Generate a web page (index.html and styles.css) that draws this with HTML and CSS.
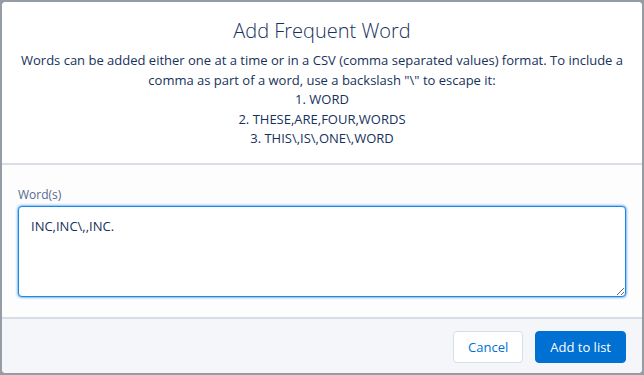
FILE: index.html
```html
<!DOCTYPE html>
<html>
<head>
<meta charset="utf-8">
<link rel="stylesheet" href="styles.css">
</head>
<body>
<div class="backdrop">
  <section class="modal">
    <header class="modal-header">
      <h2 class="modal-title">Add Frequent Word</h2>
      <div class="modal-desc">
        <p>Words can be added either one at a time or in a CSV (comma separated values) format. To include a comma as part of a word, use a backslash "\" to escape it:</p>
        <p>1. WORD</p>
        <p>2. THESE,ARE,FOUR,WORDS</p>
        <p>3. THIS\,IS\,ONE\,WORD</p>
      </div>
    </header>
    <div class="modal-body">
      <label class="field-label" for="words">Word(s)</label>
      <textarea id="words" class="field-textarea">INC,INC\,,INC.</textarea>
    </div>
    <footer class="modal-footer">
      <button class="btn btn-neutral">Cancel</button>
      <button class="btn btn-brand">Add to list</button>
    </footer>
  </section>
</div>
</body>
</html>
```
FILE: styles.css
```css
html, body {
  margin: 0;
  padding: 0;
}
body {
  background: #959ca4;
  font-family: "Open Sans", "Lato", sans-serif;
  color: #16325c;
}
.backdrop {
  padding: 2px 2px 2px 2px;
}
.modal {
  width: 640px;
  height: 371px;
  background: #fff;
  border-radius: 4px;
  overflow: hidden;
  display: flex;
  flex-direction: column;
}
.modal-header {
  padding: 16px 16px 14px;
  border-bottom: 2px solid #d8dde6;
  text-align: center;
  background: #fff;
}
.modal-title {
  margin: 0;
  font-size: 20px;
  font-weight: 300;
  line-height: 25px;
  color: #16325c;
}
.modal-desc {
  margin-top: 8px;
  font-size: 13px;
  line-height: 19.5px;
}
.modal-desc p {
  margin: 0;
}
.modal-body {
  flex: 1;
  background: #fdfdfd;
  padding: 17px 16px 0;
}
.field-label {
  display: block;
  padding-top: 4px;
  margin-bottom: 2px;
  font-size: 12px;
  line-height: 18px;
  color: #54698d;
}
.field-textarea {
  display: block;
  box-sizing: border-box;
  width: 100%;
  height: 91px;
  margin: 0;
  padding: 10px 12px 8px;
  border: 1px solid #1589ee;
  border-radius: 4px;
  box-shadow: 0 0 3px #0070d2;
  outline: none;
  background: #fff;
  font-family: "Open Sans", "Lato", sans-serif;
  font-size: 13px;
  line-height: 19.5px;
  color: #16325c;
}
.modal-footer {
  height: 56px;
  box-sizing: border-box;
  border-top: 2px solid #d8dde6;
  background: #f4f6f9;
  padding: 12px 16px;
  display: flex;
  justify-content: flex-end;
  gap: 12px;
}
.btn {
  height: 32px;
  padding: 0 14px;
  border-radius: 4px;
  font-family: "Open Sans", "Lato", sans-serif;
  font-size: 13px;
  line-height: 30px;
  cursor: pointer;
}
.btn-neutral {
  background: #fff;
  border: 1px solid #d8dde6;
  color: #0070d2;
}
.btn-brand {
  background: #0070d2;
  border: 1px solid #0070d2;
  color: #fff;
}
```
